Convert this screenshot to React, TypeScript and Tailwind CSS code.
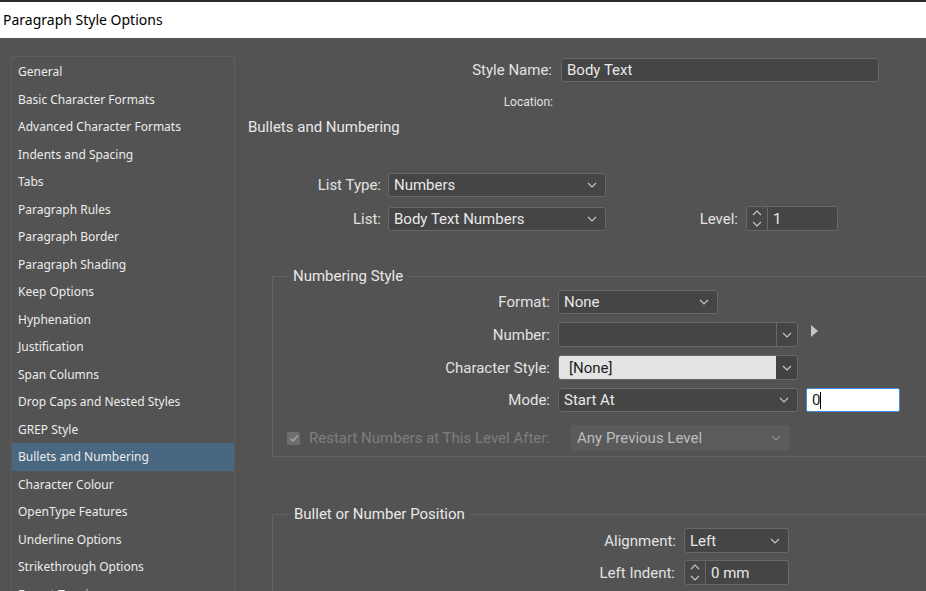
import React from "react";

const Chevron = ({ color = "#c8c8c8" }: { color?: string }) => (
  <svg width="10" height="6" viewBox="0 0 10 6" fill="none">
    <path d="M1 1 L5 5 L9 1" stroke={color} strokeWidth="1.1" />
  </svg>
);

const Spinner = ({ h }: { h: string }) => (
  <div className={`w-[22px] ${h} bg-[#474747] border border-[#686868] rounded-l-[3px] flex flex-col items-center justify-center gap-[5px]`}>
    <svg width="10" height="6" viewBox="0 0 10 6" fill="none">
      <path d="M1 5 L5 1 L9 5" stroke="#c8c8c8" strokeWidth="1.1" />
    </svg>
    <svg width="10" height="6" viewBox="0 0 10 6" fill="none">
      <path d="M1 1 L5 5 L9 1" stroke="#c8c8c8" strokeWidth="1.1" />
    </svg>
  </div>
);

const Select = ({ w, h = "h-[24px]", value }: { w: string; h?: string; value: string }) => (
  <div className={`${w} ${h} bg-[#454545] border border-[#686868] rounded-[3px] flex items-center justify-between pl-[5px] pr-[8px] text-[#e8e8e8] text-[15px]`}>
    <span className="pt-[1px]">{value}</span>
    <Chevron />
  </div>
);

const items = [
  "General",
  "Basic Character Formats",
  "Advanced Character Formats",
  "Indents and Spacing",
  "Tabs",
  "Paragraph Rules",
  "Paragraph Border",
  "Paragraph Shading",
  "Keep Options",
  "Hyphenation",
  "Justification",
  "Span Columns",
  "Drop Caps and Nested Styles",
  "GREP Style",
  "Bullets and Numbering",
  "Character Colour",
  "OpenType Features",
  "Underline Options",
  "Strikethrough Options",
  "Export Tagging",
];

export default function App() {
  const label = "text-right text-[#e2e2e2] text-[15px] shrink-0 pt-[1px]";
  return (
    <div className="w-[926px] h-[591px] overflow-hidden bg-[#535353] flex flex-col" style={{ fontFamily: "Roboto, 'Liberation Sans', sans-serif" }}>
      <div className="h-[2px] bg-[#2b2b2b] shrink-0" />
      <div className="h-[36px] bg-white shrink-0 flex items-center pl-[3px] pb-[1px] text-[14px] text-black" style={{ fontFamily: "'Noto Sans', sans-serif" }}>
        Paragraph Style Options
      </div>
      <div className="flex-1 flex min-h-0">
        {/* Sidebar */}
        <div className="ml-[11px] mt-[18px] w-[224px] shrink-0 border border-b-0 border-[#5e5e5e] pt-[1px] overflow-hidden" style={{ fontFamily: "'Noto Sans', sans-serif" }}>
          {items.map((it) => (
            <div
              key={it}
              className={`h-[27.5px] flex items-center pl-[6px] pt-[1px] text-[12px] text-[#ececec] ${it === "Bullets and Numbering" ? "bg-[#4a6782]" : ""}`}
            >
              {it}
            </div>
          ))}
        </div>

        {/* Content */}
        <div className="flex-1 flex flex-col min-w-0">
          <div className="mt-[20px] flex items-center h-[24px]">
            <div className={`w-[317px] ${label}`}>Style Name:</div>
            <div className="ml-[9px] w-[318px] h-[24px] bg-[#454545] border border-[#686868] rounded-[3px] flex items-center pl-[5px] pt-[1px] text-[#e8e8e8] text-[15px]">
              Body Text
            </div>
          </div>
          <div className="mt-[11px] flex items-center h-[16px]">
            <div className="w-[318px] text-right text-[#e2e2e2] text-[12px] pt-[1px]">Location:</div>
          </div>
          <div className="mt-[8px] h-[20px] flex items-center pl-[13px] text-[15px] text-[#e8e8e8]">Bullets and Numbering</div>

          <div className="mt-[36px] flex items-center h-[24px]">
            <div className={`w-[146px] ${label}`}>List Type:</div>
            <div className="ml-[7px]">
              <Select w="w-[218px]" value="Numbers" />
            </div>
          </div>
          <div className="mt-[9px] flex items-center h-[25px]">
            <div className={`w-[146px] ${label}`}>List:</div>
            <div className="ml-[7px]">
              <Select w="w-[218px]" value="Body Text Numbers" />
            </div>
            <div className={`w-[132px] ${label}`}>Level:</div>
            <div className="ml-[8px] flex">
              <Spinner h="h-[25px]" />
              <div className="w-[70px] h-[25px] bg-[#454545] border border-l-0 border-[#686868] rounded-r-[3px] flex items-center pl-[5px] pt-[1px] text-[#e8e8e8] text-[15px]">1</div>
            </div>
          </div>

          {/* Numbering Style */}
          <fieldset className="mt-[35px] ml-[37px] w-[720px] shrink-0 border border-[#626262] pb-[5px]">
            <legend className="ml-[16px] px-[4px] h-[20px] text-[15px] text-[#e8e8e8] leading-[20px]">Numbering Style</legend>
            <div className="pt-[4px] flex flex-col">
              <div className="flex items-center h-[24px]">
                <div className={`w-[277px] ${label}`}>Format:</div>
                <div className="ml-[8px]">
                  <Select w="w-[160px]" value="None" />
                </div>
              </div>
              <div className="mt-[8px] flex items-center h-[25px]">
                <div className={`w-[277px] ${label}`}>Number:</div>
                <div className="ml-[8px] w-[240px] h-[25px] bg-[#454545] border border-[#686868] rounded-[3px] flex">
                  <div className="flex-1 border-r border-[#686868]" />
                  <div className="w-[20px] flex items-center justify-center"><Chevron /></div>
                </div>
                <svg className="ml-[13px] -mt-[8px]" width="7" height="12" viewBox="0 0 7 12">
                  <path d="M0 0 L7 6 L0 12 Z" fill="#c4c4c4" />
                </svg>
              </div>
              <div className="mt-[8px] flex items-center h-[25px]">
                <div className={`w-[277px] ${label}`}>Character Style:</div>
                <div className="ml-[8px] w-[240px] h-[25px] bg-[#434343] border border-[#686868] rounded-[3px] flex overflow-hidden">
                  <div className="flex-1 bg-[#e3e3e3] flex items-center pl-[10px] pt-[1px] text-[15px] text-[#1e1e1e]">[None]</div>
                  <div className="w-[21px] flex items-center justify-center"><Chevron /></div>
                </div>
              </div>
              <div className="mt-[8px] flex items-center h-[24px]">
                <div className={`w-[277px] ${label}`}>Mode:</div>
                <div className="ml-[8px]">
                  <Select w="w-[240px]" value="Start At" />
                </div>
                <div className="ml-[8px] w-[94px] h-[24px] bg-white border border-[#3b8ee0] rounded-[2px] flex items-center pl-[5px] pt-[1px] text-[15px] text-[#222]">
                  0<span className="w-[1px] h-[17px] bg-black" />
                </div>
              </div>
              <div className="mt-[13px] flex items-center h-[26px]">
                <div className="ml-[14px] w-[13px] h-[13px] rounded-[2px] bg-[#6e6e6e] flex items-center justify-center">
                  <svg width="10" height="9" viewBox="0 0 10 9" fill="none">
                    <path d="M1.5 4.5 L4 7 L8.5 1.5" stroke="#a3a3a3" strokeWidth="1.6" />
                  </svg>
                </div>
                <div className="ml-[9px] w-[262px] shrink-0 pt-[1px] text-[15px] text-[#7e7e7e]">Restart Numbers at This Level After:</div>
                <div className="w-[219px] h-[26px] bg-[#5b5b5b] rounded-[3px] flex items-center justify-between pl-[6px] pr-[9px] text-[15px] text-[#bdbdbd]">
                  <span className="pt-[1px]">Any Previous Level</span>
                  <Chevron color="#8c8c8c" />
                </div>
              </div>
            </div>
          </fieldset>

          {/* Bullet or Number Position */}
          <fieldset className="mt-[47px] ml-[37px] w-[720px] shrink-0 border border-[#626262]">
            <legend className="ml-[17px] px-[4px] h-[20px] text-[15px] text-[#e8e8e8] leading-[20px]">Bullet or Number Position</legend>
            <div className="pt-[4px] flex flex-col">
              <div className="flex items-center h-[25px]">
                <div className={`w-[403px] ${label}`}>Alignment:</div>
                <div className="ml-[8px]">
                  <Select w="w-[105px]" h="h-[25px]" value="Left" />
                </div>
              </div>
              <div className="mt-[7px] flex items-center h-[25px]">
                <div className={`w-[402px] ${label}`}>Left Indent:</div>
                <div className="ml-[9px] flex">
                  <Spinner h="h-[25px]" />
                  <div className="w-[83px] h-[25px] bg-[#454545] border border-l-0 border-[#686868] rounded-r-[3px] flex items-center pl-[5px] pt-[1px] text-[#e8e8e8] text-[15px]">0 mm</div>
                </div>
              </div>
              <div className="h-[40px]" />
            </div>
          </fieldset>
        </div>
      </div>
    </div>
  );
}
